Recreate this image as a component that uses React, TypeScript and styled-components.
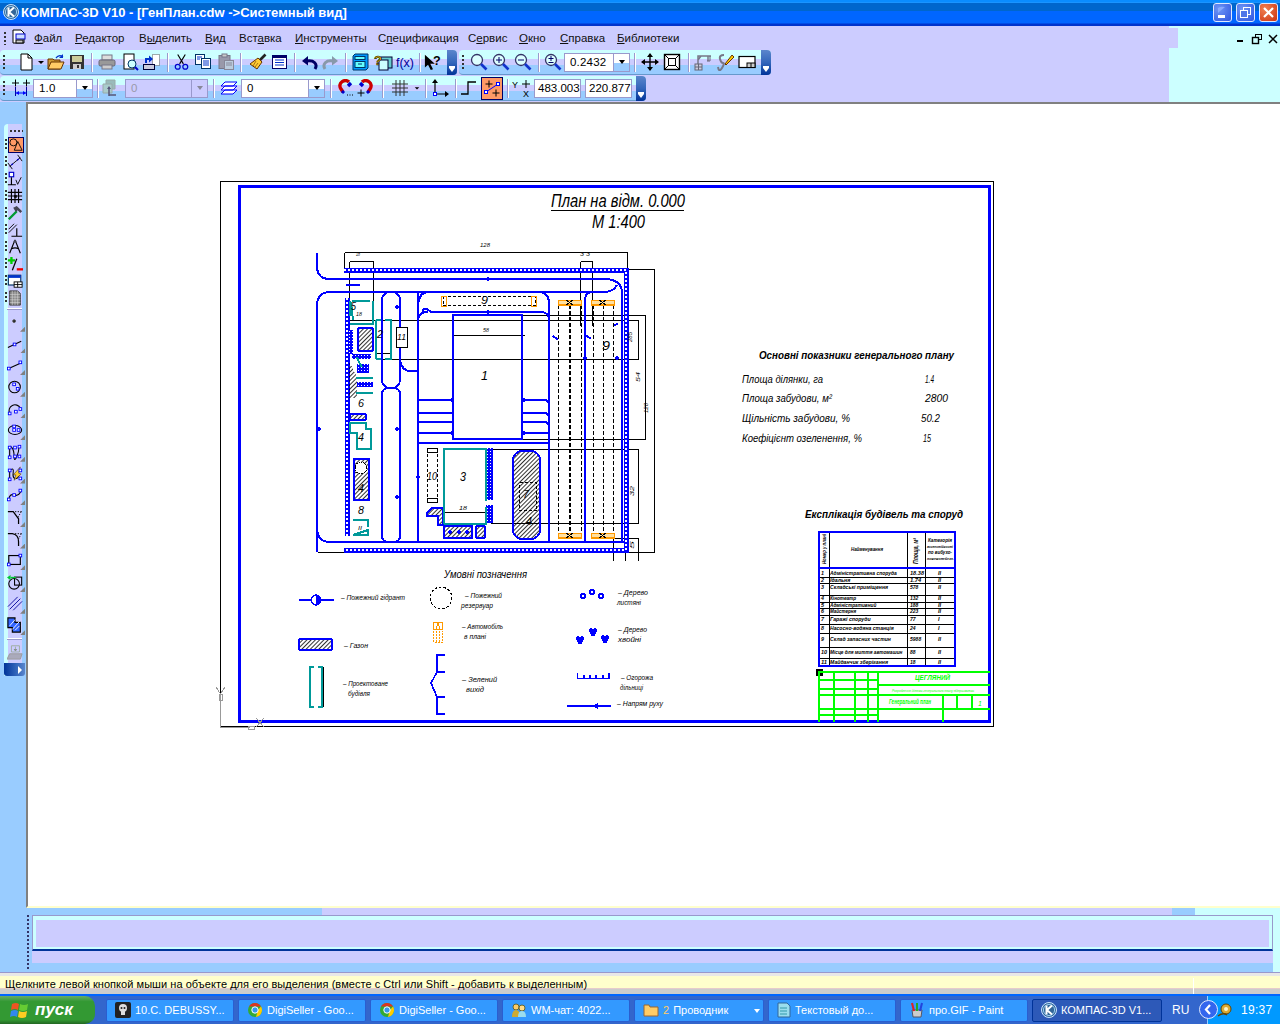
import React from "react";
import styled, { createGlobalStyle } from "styled-components";

const GlobalStyle = createGlobalStyle`
  html, body { margin: 0; padding: 0; background: #fff; overflow: hidden; }
  body { font-family: "Liberation Sans", Arial, sans-serif; font-size: 11px; color: #000; }
`;

const Screen = styled.div`
  width: 1280px; height: 1024px; display: flex; flex-direction: column; overflow: hidden;
`;

/* ---------- title bar ---------- */
const TitleBar = styled.header`
  height: 26px; display: flex; align-items: center; padding: 0 2px 2px 3px; box-sizing: border-box;
  background: linear-gradient(180deg,#0a8cff 0,#0a8cff 2px,#2a9cff 3px,#0066cc 3px,#0066cc 11px,#0066ff 11px,#0066ff 23px,#0033cc 24px,#0033cc 26px);
`;
const TitleText = styled.span`
  margin-left: 2px; color: #fff; font: bold 13px "Liberation Sans", Arial, sans-serif; flex: 1; white-space: nowrap;
`;
const WinBtn = styled.span<{ $red?: boolean }>`
  width: 19px; height: 19px; margin-left: 4px; box-sizing: border-box; border: 1px solid #dfe8ff; border-radius: 3px;
  display: flex; align-items: center; justify-content: center;
  background: ${p => p.$red ? "radial-gradient(circle at 30% 30%,#f08050,#cc3311)" : "radial-gradient(circle at 30% 30%,#6f96f5,#2f55e0)"};
`;

/* ---------- header bands ---------- */
const HeaderBand = styled.div`
  background: linear-gradient(90deg,#ccccff 1169px,#ccffff 1169px);
  height: 76px; display: flex; flex-direction: column; flex: none;
`;
const MenuRow = styled.div`
  height: 24px; position: relative; display: flex;
`;
const MenuStrip = styled.nav`
  width: 1178px; height: 20px; margin-top: 2px; background: #ccccff; display: flex; align-items: center; box-sizing: border-box; padding-left: 4px; flex: none;
`;
const Grip = styled.span`
  width: 2px; height: 13px; flex: none;
  background: repeating-linear-gradient(180deg,#333 0,#333 2px,transparent 2px,transparent 4px);
`;
const SysIcon = styled.span`
  width: 16px; height: 18px; margin: 0 7px 0 5px; display: flex;
`;
const MenuItem = styled.span<{ $w: number }>`
  width: ${p => p.$w}px; flex: none; font-size: 11.5px; color: #111; white-space: nowrap;
  u { text-decoration-thickness: 1px; text-underline-offset: 1px; }
`;
const MdiControls = styled.div`
  margin-left: 58px; display: flex; align-items: center; gap: 5px; margin-top: 2px;
`;
const ToolRow = styled.div`
  height: 26px; display: flex; gap: 2px; flex: none;
`;
const Toolbar = styled.div<{ $w: number }>`
  width: ${p => p.$w}px; height: 25px; box-sizing: border-box; display: flex; align-items: center; padding-left: 3px; position: relative; flex: none;
  border-radius: 4px; border-bottom: 1px solid #6699cc;
  background: linear-gradient(180deg,#ccffff 0,#ccffff 9px,#ccccff 9px,#ccccff 15px,#99ccff 15px,#99ccff 100%);
`;
const TGrip = styled(Grip)<{ $m: number }>`
  height: 15px; margin-right: ${p => p.$m}px;
`;
const Btn = styled.span<{ $w: number; $active?: boolean; $ml?: number }>`
  width: ${p => p.$w}px; height: 23px; flex: none; display: flex; align-items: center; justify-content: center; box-sizing: border-box;
  margin-left: ${p => p.$ml ?? 0}px;
  ${p => p.$active ? "background:#ff9966;border:1px solid #000066;" : ""}
`;
const Sep = styled.span<{ $w: number }>`
  width: ${p => p.$w}px; height: 19px; flex: none; display: flex; justify-content: center;
  &::before { content: ""; width: 1px; background: #9999cc; box-shadow: 1px 0 0 #fff; }
`;
const Combo = styled.span<{ $w: number; $off?: boolean; $ml?: number; $tight?: boolean }>`
  width: ${p => p.$w}px; height: 19px; flex: none; box-sizing: border-box; border: 1px solid #9999cc; display: flex; align-items: center;
  margin-left: ${p => p.$ml ?? 0}px;
  background: ${p => p.$off ? "#ccccff" : "#fff"}; color: ${p => p.$off ? "#9999aa" : "#000"};
  font-size: 11.5px; padding-left: ${p => p.$tight ? 3 : 5}px; position: relative; letter-spacing: ${p => p.$tight ? 0 : .2}px; white-space: nowrap; overflow: hidden;
`;
const ComboArrow = styled.span<{ $off?: boolean }>`
  position: absolute; right: 0; top: 0; bottom: 0; width: 15px; border-left: 1px solid #9999cc;
  background: ${p => p.$off ? "#ccccff" : "linear-gradient(180deg,#fff 0,#fff 9px,#99ccff 9px)"};
  display: flex; align-items: center; justify-content: center;
  &::after { content: ""; border: 3px solid transparent; border-top: 4px solid ${p => p.$off ? "#889" : "#000"}; border-bottom: 0; }
`;
const Handle = styled.span`
  position: absolute; right: 0; top: 0; width: 10px; height: 25px; border-radius: 0 4px 4px 0;
  background: linear-gradient(180deg,#5b86cc 0,#3366bb 50%,#003399 100%);
  display: flex; align-items: flex-end; justify-content: center; padding-bottom: 3px; box-sizing: border-box;
  &::after { content: ""; border: 3px solid transparent; border-top: 4px solid #fff; border-bottom: 0; box-shadow: 0 -2px 0 -0px #fff; }
`;

/* ---------- work area ---------- */
const Work = styled.main`
  height: 806px; display: flex; flex: none;
`;
const Side = styled.aside`
  width: 26px; flex: none; background: #99ccff; padding-top: 22px; box-sizing: border-box;
`;
const SideStrip = styled.div`
  margin-left: 4px; width: 21px; border-radius: 4px 4px 0 0; padding-top: 12px; position: relative;
  background: linear-gradient(90deg,#ccffff 0,#ccffff 4px,#ccccff 4px,#ccccff 18px,#99ccff 18px);
`;
const SideGrip = styled.span`
  position: absolute; left: 6px; top: 6px; width: 13px; height: 2px;
  background: repeating-linear-gradient(90deg,#333 0,#333 2px,transparent 2px,transparent 4px);
`;
const Tool = styled.div<{ $h: number; $grip?: boolean; $menu?: boolean }>`
  height: ${p => p.$h}px; position: relative; display: flex; align-items: center; justify-content: center; box-sizing: border-box;
  svg { width: 16px; height: 16px; }
  ${p => p.$grip ? `&::before{content:"";position:absolute;left:1px;top:3px;width:2px;height:10px;background:repeating-linear-gradient(180deg,#333 0,#333 2px,transparent 2px,transparent 4px);}` : ""}
  ${p => p.$menu ? `&::after{content:"";position:absolute;right:0;bottom:1px;width:5px;height:5px;background:#808080;clip-path:polygon(100% 0,100% 100%,0 100%);}` : ""}
`;
const ActiveTool = styled.span`
  width: 16px; height: 16px; background: #ff9966; border: 1px solid #000066; display: flex; align-items: center; justify-content: center; margin-left: 2px; box-sizing: border-box;
  svg { width: 14px; height: 14px; }
`;
const SideRule = styled.div`
  height: 1px; margin: 2px 3px 2px 3px; background: #fff; box-shadow: 0 1px 0 #9999cc;
`;
const SideHandle = styled.div`
  height: 13px; border-radius: 0 0 3px 3px; display: flex; align-items: center; justify-content: flex-end; padding-right: 3px;
  background: linear-gradient(90deg,#003399 0,#3366bb 60%,#5b86cc 100%);
  &::after { content: ""; border: 4px solid transparent; border-left: 4px solid #fff; border-right: 0; }
`;
const Canvas = styled.section`
  flex: 1; border-top: 2px solid #808080; border-left: 2px solid #808080; border-bottom: 2px solid #ffffcc; background: #fff; display: flex; overflow: hidden;
`;
const Sheet = styled.svg`
  width: 1252px; height: 802px; display: block; flex: none; shape-rendering: crispEdges;
`;
const Cad = styled.text<{ $bold?: boolean }>`
  font-family: "Liberation Sans", Arial, sans-serif; font-style: italic; font-weight: ${p => p.$bold ? 700 : 400};
`;

/* ---------- bottom ---------- */
const Dock = styled.div`
  height: 68px; box-sizing: border-box; padding: 7px 7px 0 32px; position: relative; flex: none;
  background:
    linear-gradient(90deg,#99ccff 322px,#ccccff 322px,#ccccff 1172px,#99ccff 1172px,#99ccff 1195px,#ccffff 1195px) top / 100% 7px no-repeat,
    linear-gradient(180deg,#ccccff 0,#ccccff 55px,#99ccff 55px,#99ccff 64px,#9999cc 64px,#9999cc 65px,#e8e8e8 65px);
`;
const DockFade = styled.span`
  position: absolute; left: 0; top: 0; bottom: 4px; width: 32px; background: #99ccff;
`;
const DockEnd = styled.span`
  position: absolute; right: 0; top: 0; bottom: 4px; width: 7px; background: #ccffff;
`;
const DockGrip = styled.span`
  position: absolute; left: 27px; top: 7px; height: 56px; width: 2px;
  background: repeating-linear-gradient(180deg,#333366 0,#333366 2px,transparent 2px,transparent 4px);
`;
const PropPanel = styled.div`
  height: 36px; box-sizing: border-box; border: 1px solid #9999cc; border-bottom: 2px solid #003399; background: #ccffff; padding: 4px 3px 2px 3px; position: relative;
`;
const PropInner = styled.div`
  height: 100%; background: #ccccff;
`;
const StatusBar = styled.footer`
  height: 18px; box-sizing: border-box; padding-top: 2px; background: linear-gradient(180deg,#ffffcc 0,#ffffcc 12px,#ffcccc 12px,#cccccc 13px); display: flex; position: relative; overflow: hidden; flex: none;
  font-size: 11px; align-items: flex-start; line-height: 13px;
`;
const StatusText = styled.span`
  padding-left: 5px; width: 1194px; box-sizing: border-box; border-right: 1px solid #fff; height: 18px; white-space: nowrap; letter-spacing: .05px;
`;
const TaskBar = styled.div`
  height: 30px; display: flex; align-items: center; background: #3366cc; border-top: 2px solid #0066ff; box-sizing: border-box; position: relative; flex: none;
`;
const Start = styled.span`
  width: 95px; height: 28px; flex: none; display: flex; align-items: center; box-sizing: border-box; padding-left: 10px; gap: 5px;
  border-radius: 0 10px 10px 0; background: linear-gradient(180deg,#66aa66 0,#339933 20%,#339933 85%,#226622 100%);
  color: #fff; font: italic bold 17px "Liberation Sans", Arial, sans-serif; margin-right: 11px;
`;
const Task = styled.span<{ $active?: boolean; $w?: number }>`
  width: ${p => p.$w ?? 128}px; height: 23px; margin-right: ${p => p.$active ? 0 : 4}px; flex: none; box-sizing: border-box; display: flex; align-items: center; padding-left: 8px; gap: 4px; position: relative;
  border-radius: 2px; color: #fff; font-size: 11px; white-space: nowrap; overflow: hidden;
  background: ${p => p.$active ? "#2d59b8" : "#3399ff"}; border: 1px solid ${p => p.$active ? "#003399" : "#2a5ed0"};
`;
const TaskNum = styled.span`
  color: #ffcc66;
`;
const TaskCaret = styled.span`
  position: absolute; right: 3px; top: 9px; border: 3px solid transparent; border-top: 4px solid #fff; border-bottom: 0;
`;
const Lang = styled.span`
  color: #fff; margin-left: 10px; width: 35px; font-size: 12px;
`;
const Tray = styled.span`
  flex: 1; height: 28px; background: #0099ff; display: flex; align-items: center; box-sizing: border-box; position: relative; color: #fff; font-size: 12px; padding-left: 33px; letter-spacing: .3px; gap: 0;
  border-left: 1px solid #99ccff;
`;
const TrayChevron = styled.span`
  position: absolute; left: -9px; top: 4px; width: 19px; height: 19px; border-radius: 50%; box-sizing: border-box; border: 1px solid #dfe8ff; background: #3366ee;
  display: flex; align-items: center; justify-content: center;
`;
const TrayIcon = styled.span`
  position: absolute; left: 9px; top: 6px; display: flex;
`;

/* ---------- icons ---------- */
const S: React.FC<{ s?: number; v?: number; children: React.ReactNode }> = ({ s = 18, v = 18, children }) => (
  <svg width={s} height={s} viewBox={`0 0 ${v} ${v}`}>{children}</svg>
);
const Sq = ({ x, y }: { x: number; y: number }) => <rect x={x - 1.5} y={y - 1.5} width="3" height="3" fill="#fff" stroke="#0000ff" />;
const Mag = ({ c }: { c?: React.ReactNode }) => (
  <S><circle cx="7" cy="7" r="5.5" fill="#ddffff" stroke="#333366" strokeWidth="1.3" /><path d="M11 11l5.5 5.5" stroke="#1133cc" strokeWidth="2.6" />{c}</S>
);
const Cross = ({ x, y, r = 3.5, c = "#000" }: { x: number; y: number; r?: number; c?: string }) => (
  <path d={`M${x - r} ${y}h${2 * r}M${x} ${y - r}v${2 * r}`} stroke={c} fill="none" />
);

const Logo = ({ size = 16 }: { size?: number }) => (
  <svg width={size} height={size} viewBox="0 0 16 16">
    <circle cx="8" cy="8" r="7.5" fill="#336699" stroke="#cce6ff" />
    <circle cx="8" cy="8" r="5.6" fill="none" stroke="#99ccee" />
    <path d="M5.5 3.5v9M11 3.5L6 8l5 4.5" stroke="#fff" strokeWidth="2" fill="none" />
  </svg>
);

const icons: Record<string, React.ReactElement> = {
  new: <S><path d="M4 1h7l4 4v12H4z" fill="#fff" stroke="#000" /><path d="M11 1v4h4" fill="none" stroke="#000" /></S>,
  caret: <S s={8} v={8}><path d="M1 3h6L4 6z" fill="#000" /></S>,
  open: <S><path d="M1 6h5l1 1h6v9H1z" fill="#cc9933" stroke="#663300" /><path d="M1 16l3-7h13l-3 7z" fill="#ffcc66" stroke="#663300" /><path d="M9 5q3-4 7-1" stroke="#0033cc" strokeWidth="1.3" fill="none" /><path d="M16 1v4h-4z" fill="#0033cc" /></S>,
  save: <S><rect x="2" y="2" width="14" height="14" fill="#333" /><rect x="4" y="3" width="10" height="6" fill="#cccc99" /><rect x="5" y="11" width="8" height="5" fill="#ccc" /><rect x="9" y="12" width="2" height="3" fill="#333" /></S>,
  print: <S><rect x="4" y="2" width="10" height="5" fill="#ddd" stroke="#778" /><rect x="1" y="7" width="16" height="6" rx="1.5" fill="#999" stroke="#667" /><rect x="4" y="12" width="10" height="4" fill="#ccc" stroke="#778" /></S>,
  preview: <S><rect x="3" y="1" width="10" height="15" fill="#fff" stroke="#000" /><circle cx="11" cy="11" r="4" fill="#ccffff" stroke="#003366" /><path d="M14 14l3 3" stroke="#0000cc" strokeWidth="2" /></S>,
  swap: <S><rect x="10.5" y="1.5" width="7" height="11" fill="#fff" stroke="#555" strokeDasharray="1 1" /><rect x="1.5" y="11.5" width="11" height="5" fill="#ccd" stroke="#003" /><path d="M4 10V6h3" stroke="#0033cc" strokeWidth="2" fill="none" /><path d="M7 2.5v7l4-3.5z" fill="#0033cc" /></S>,
  cut: <S><path d="M5 1l6 10M13 1L7 11" stroke="#000" strokeWidth="1.2" /><circle cx="5" cy="14" r="2.6" fill="none" stroke="#0000cc" strokeWidth="1.3" /><circle cx="13" cy="14" r="2.6" fill="none" stroke="#0000cc" strokeWidth="1.3" /></S>,
  copy: <S><rect x="1.5" y="1.5" width="9" height="10" fill="#fff" stroke="#003366" /><rect x="7.5" y="5.5" width="9" height="10" fill="#fff" stroke="#003366" /><path d="M3 4h5M3 6h3M9 8h6M9 10h6M9 12h6" stroke="#0033cc" /></S>,
  paste: <S><rect x="2" y="2.5" width="11" height="13" fill="#99a" stroke="#778" /><rect x="5" y="1" width="5" height="3" fill="#ccc" stroke="#778" /><rect x="7.5" y="7.5" width="9" height="9" fill="#bcd" stroke="#889" /><path d="M9 10h6M9 12h6" stroke="#889" /></S>,
  brush: <S><path d="M16.5 1.5l-6 6" stroke="#222" strokeWidth="2.6" /><path d="M9 5l4 4-5 7-7-5z" fill="#ffcc33" stroke="#663300" /><path d="M4 13l3-5M6 14l3-4" stroke="#663300" strokeWidth=".6" /></S>,
  list: <S s={16} v={16}><rect x=".5" y="1.5" width="14" height="13" fill="#fff" stroke="#000066" /><rect x=".5" y="1.5" width="14" height="2.5" fill="#000066" /><path d="M3 6h9M3 8.5h9M3 11h9" stroke="#0033cc" /></S>,
  undo: <S><path d="M14 16c3-5-1-9-8-8" stroke="#000066" strokeWidth="3" fill="none" /><path d="M7 3L1 8l6 4.5z" fill="#000066" /></S>,
  redo: <S><path d="M4 16c-3-5 1-9 8-8" stroke="#8899aa" strokeWidth="3" fill="none" /><path d="M11 3l6 5-6 4.5z" fill="#8899aa" /></S>,
  block: <S><path d="M4 1h13v14l-2 2H2V3z" fill="#0099ff" stroke="#003366" /><rect x="4" y="3.5" width="10" height="3" fill="#66ffff" stroke="#003366" /><rect x="4" y="8.5" width="10" height="6" fill="#66ffff" stroke="#003366" /><path d="M7 11h4" stroke="#003366" /></S>,
  qhelp: <S v={20} s={20}><rect x="8" y="5" width="11" height="11" fill="#66cccc" stroke="#003" /><rect x="6" y="8" width="9" height="10" fill="#ccffff" stroke="#003" /><text x="1" y="13" fontFamily="Liberation Sans" fontWeight="700" fontSize="13" fill="#ffcc00" stroke="#000" strokeWidth=".6">?</text></S>,
  fx: <S s={18} v={18}><text x="0" y="14" fontFamily="Liberation Sans" fontSize="13" fill="#000099" textLength="18" lengthAdjust="spacingAndGlyphs">f(x)</text></S>,
  help: <S s={20} v={20}><path d="M1 2v14l3.5-3 3 6 2.5-1-3-6h5z" fill="#000" /><text x="10" y="13" fontFamily="Liberation Sans" fontWeight="700" fontSize="14" fill="#000">?</text></S>,
  zoom: <Mag />,
  zoomIn: <Mag c={<path d="M4 7h6M7 4v6" stroke="#000066" />} />,
  zoomOut: <Mag c={<path d="M4 7h6" stroke="#000066" />} />,
  zoomPm: <Mag c={<path d="M4.5 5.5h5M7 3v5M4.5 9.5h5" stroke="#000066" />} />,
  pan: <S><path d="M9 1v16M1 9h16" stroke="#000" strokeWidth="1.4" /><path d="M9 0l3 4H6zM9 18l3-4H6zM0 9l4-3v6zM18 9l-4-3v6z" fill="#000" /></S>,
  fit: <S><rect x="1.5" y="1.5" width="15" height="15" fill="#fff" stroke="#000" strokeWidth="1.4" /><rect x="5.5" y="5.5" width="7" height="7" fill="none" stroke="#000" /><path d="M2 2l4 4M16 2l-4 4M2 16l4-4M16 16l-4-4" stroke="#000" /></S>,
  crane: <S><path d="M4 17V3h13M7 3L4 7M14 3v5" stroke="#778" strokeWidth="1.5" fill="none" /><rect x="1" y="11" width="7" height="6" fill="#ccd" stroke="#667" /><path d="M1 14h7M4.5 11v6" stroke="#667" /><path d="M16 3v5M13 8h3" stroke="#667" /></S>,
  hook: <S><path d="M8 2q-5 0-4 4t3 4-1 5-4-1" stroke="#778" strokeWidth="2" fill="none" /><path d="M9 11l7-9 2 2-8 8z" fill="#ffcc00" stroke="#663300" /></S>,
  win: <S><rect x="1" y="3.5" width="16" height="11" fill="#fff" stroke="#000" strokeWidth="1.2" /><rect x="9" y="10" width="8" height="4.5" fill="#ccc" stroke="#000" /><path d="M13 10v4.5" stroke="#000" /></S>,
  dim: <S><Cross x={3.5} y={4} /><Cross x={14.5} y={4} /><path d="M3.5 8v9M14.5 8v9" stroke="#000099" /><path d="M3.5 14h11" stroke="#0000ff" /><path d="M4 14l3-2v4zM14 14l-3-2v4z" fill="#0000ff" /></S>,
  layGray: <S><path d="M5 1h9v9H5z" fill="#99bbbb" stroke="#99aaaa" /><path d="M2 5h9v9H2z" fill="#aacccc" stroke="#99aaaa" /><path d="M8 17V9M8 16h7" stroke="#557" strokeWidth="1.5" /><path d="M8 7l2 3H6z" fill="#557" /></S>,
  layers: <S><path d="M5 3h12l-4 4H1zM5 7h12l-4 4H1zM5 11h12l-4 4H1z" fill="#fff" stroke="#0000ff" /></S>,
  mag1: <S><path d="M13 3C9-1 1 4 5 10l2 3" stroke="#cc0000" strokeWidth="3.4" fill="none" /><path d="M15 4l-3 3" stroke="#0000cc" strokeWidth="3.4" /><path d="M8 12l-2 2" stroke="#0000cc" strokeWidth="3" /><path d="M11 16h1M13.5 16h1M16 16h1" stroke="#000" /></S>,
  mag2: <S><path d="M5 3c4-4 12 1 8 7l-2 3" stroke="#cc0000" strokeWidth="3.4" fill="none" /><path d="M3 4l3 3" stroke="#0000cc" strokeWidth="3.4" /><path d="M10 12l2 2" stroke="#0000cc" strokeWidth="3" /><Cross x={4} y={14} /></S>,
  grid: <S><path d="M1 5h16M1 9h16M1 13h16M5 1v16M9 1v16M13 1v16" stroke="#333" /></S>,
  axes: <S><path d="M4 15V3M4 15h12" stroke="#000" strokeWidth="1.2" /><path d="M4 0l3 4H1zM18 15l-4-3v6z" fill="#000" /><rect x="2.5" y="13.5" width="3" height="3" fill="#fff" stroke="#0000ff" /></S>,
  step: <S><path d="M1 15h7V3h8" stroke="#000" fill="none" strokeWidth="1.3" /></S>,
  snap: <S><path d="M3 13L15 5" stroke="#0000ff" /><Sq x={3} y={13} /><Sq x={15} y={5} /><Cross x={6} y={5} /><Cross x={13} y={14} /></S>,
  yx: <S s={20} v={20}><text x="0" y="10" fontSize="9" fontFamily="Liberation Sans">Y</text><text x="11" y="19" fontSize="9" fontFamily="Liberation Sans">X</text><Cross x={14} y={6} r={4} /></S>,
  ot: <S s={16} v={16}><circle cx="5" cy="5" r="4" fill="none" stroke="#000" /><path d="M10 4l5 10H6z" fill="none" stroke="#000" /></S>,
  dimS: <S><path d="M3 14L15 4" stroke="#000" /><path d="M1 10l5 7M12 1l5 7" stroke="#000" /><path d="M4 13l3-1-1-2zM14 5l-3 1 1 2z" fill="#0000cc" /></S>,
  ortho: <S><rect x="2.5" y="1.5" width="5" height="5" fill="#fff" stroke="#0000cc" strokeWidth="1.3" /><path d="M5 7v8M1 15.5h9" stroke="#000" strokeWidth="1.3" /><path d="M10 10l2 5 4-8" stroke="#000" fill="none" /></S>,
  gridT: <S><path d="M1 5h16M1 9h16M1 13h16M5 1v16M9 1v16M13 1v16" stroke="#000" strokeWidth="1.3" /><rect x="8" y="8" width="3" height="3" fill="#000" /></S>,
  hammer: <S><path d="M2 16L11 7" stroke="#009933" strokeWidth="2.6" /><path d="M7 3l4-2 6 6-2 2-3-3-2 2z" fill="#445" /></S>,
  par: <S><path d="M2 8l6-6M2 12l9-9" stroke="#000" /><path d="M11 7v9M5 16h12" stroke="#000" strokeWidth="1.3" /></S>,
  compass: <S><path d="M9 1L3 16M9 1l6 15M5 11q4-2 8 0" stroke="#000" strokeWidth="1.3" fill="none" /><circle cx="9" cy="2.5" r="1.5" fill="#445" /></S>,
  plusMinus: <S><path d="M1 5h8M5 1v8" stroke="#00cc00" strokeWidth="2.6" /><path d="M11 15h7" stroke="#ee0000" strokeWidth="2.6" /><path d="M11 3L6 16" stroke="#000" strokeWidth="1.4" /></S>,
  winS: <S><rect x="1.5" y="2.5" width="14" height="11" fill="#fff" stroke="#003366" strokeWidth="1.3" /><rect x="1.5" y="2.5" width="14" height="3" fill="#0033cc" /><rect x="8" y="10" width="9" height="6" fill="#fff" stroke="#000" /><path d="M12 10v6M8 13h9" stroke="#000" /></S>,
  pageS: <S><path d="M3 1h9l3 3v13H3z" fill="#888" stroke="#333" /><path d="M3 5h12M3 8h12M3 11h12M3 14h12M6 1v16M9 1v16M12 1v16" stroke="#ddd" strokeWidth=".6" /></S>,
  point: <S><circle cx="8" cy="8" r="1.6" fill="#222" stroke="#555" /></S>,
  seg1: <S><path d="M1 13L16 6" stroke="#000" strokeWidth="1.2" /><Sq x={8.5} y={9.5} /></S>,
  seg2: <S><path d="M2 13L15 7" stroke="#000" strokeWidth="1.2" /><Sq x={2} y={13} /><Sq x={15} y={6} /></S>,
  circle: <S><circle cx="8.5" cy="9" r="6.5" fill="none" stroke="#000" strokeWidth="1.2" /><Sq x={8} y={6} /><Sq x={12} y={11} /></S>,
  arc: <S><path d="M3 14A6.5 6.5 0 0 1 15 8" fill="none" stroke="#000" strokeWidth="1.2" /><Sq x={3} y={14} /><Sq x={15} y={9} /><Sq x={10} y={12} /></S>,
  ellipse: <S><ellipse cx="9" cy="9" rx="7.5" ry="5" fill="none" stroke="#000" strokeWidth="1.2" /><Sq x={8} y={5} /><Sq x={8} y={9} /><Sq x={13} y={9} /></S>,
  spline: <S><path d="M3 15V4q0-3 2.5 0T8 14t3 0 2-10" fill="none" stroke="#000" strokeWidth="1.2" /><Sq x={3} y={15} /><Sq x={3} y={4} /><Sq x={9} y={4} /><Sq x={9} y={14} /><Sq x={14} y={3} /><Sq x={14} y={14} /></S>,
  nurbs: <S><path d="M3 15V5q5-4 4 2t2 7 5-5" fill="none" stroke="#000" strokeWidth="1.2" /><path d="M7 10l8-9-2 7 3 1-8 7 2-6z" fill="#ffcc33" stroke="#000" strokeWidth=".5" /><Sq x={3} y={15} /><Sq x={3} y={5} /><Sq x={15} y={5} /><Sq x={15} y={14} /></S>,
  bez: <S><path d="M2 14q1-7 6-5t8-5" fill="none" stroke="#000" strokeWidth="1.2" /><Sq x={2} y={14} /><Sq x={8} y={9} /><Sq x={15} y={4} /></S>,
  fil1: <S><path d="M1 3h6l6 8v6" fill="none" stroke="#000" strokeWidth="1.4" /><path d="M9 3h8" stroke="#000" strokeDasharray="1.5 1.5" /><path d="M16 3L12 10" stroke="#000" strokeDasharray="1.5 1.5" /></S>,
  fil2: <S><path d="M1 3h5q7 1 7 9v5" fill="none" stroke="#000" strokeWidth="1.4" /><path d="M9 3h8M16 3L13 9" stroke="#000" strokeDasharray="1.5 1.5" /></S>,
  rect: <S><rect x="2" y="4" width="13" height="10" fill="none" stroke="#000" strokeWidth="1.3" /><Sq x={2} y={14} /><Sq x={15} y={4} /></S>,
  circArrow: <S><circle cx="8" cy="11" r="6" fill="none" stroke="#000" strokeWidth="1.2" /><rect x="8.5" y="3.5" width="8" height="9" fill="none" stroke="#000" strokeWidth="1.2" /><path d="M4 4h6" stroke="#00cc33" strokeWidth="1.6" /><path d="M0 4l4-3v6z" fill="#00cc33" /></S>,
  hatchL: <S><path d="M1 12L12 1M3 15L15 3M7 16L17 6" stroke="#000099" /></S>,
  hatchF: <S><path d="M1 1h8v5h6v11H6v-5H1z" fill="#3366ff" stroke="#000" strokeWidth="1.3" /><path d="M3 10l6-7M6 14l8-9M9 15l5-5" stroke="#fff" /></S>,
  down: <S><path d="M5 2h9v7H5z" fill="none" stroke="#99aa99" /><path d="M9.5 3v4M8 6l1.5 2L11 6" stroke="#99aa99" /><path d="M3 11h14l-2 6H0z" fill="#aab" stroke="#999" /></S>,
};
const Ic = ({ n }: { n: string }) => icons[n];

const ChromeIcon = () => (
  <svg width="16" height="16" viewBox="0 0 16 16"><circle cx="8" cy="8" r="7" fill="#33aa33" /><path d="M8 1a7 7 0 0 1 6 3.5H8z" fill="#dd3322" /><path d="M2 4.5A7 7 0 0 1 8 1v3.5z" fill="#dd3322" /><path d="M14 4.5A7 7 0 0 1 9 15l2-7z" fill="#ffcc00" /><circle cx="8" cy="8" r="3.2" fill="#3399ee" stroke="#fff" /></svg>
);

/* ---------- data ---------- */
type BarItem = { i?: string; w: number; sep?: boolean };
const bar1: BarItem[] = [
  { i: "new", w: 21 }, { i: "caret", w: 9 }, { i: "open", w: 21 }, { i: "save", w: 22 }, { sep: true, w: 6 }, { i: "print", w: 25 }, { i: "preview", w: 22 }, { i: "swap", w: 20 },
  { sep: true, w: 12 }, { i: "cut", w: 17 }, { i: "copy", w: 26 }, { i: "paste", w: 20 }, { sep: true, w: 8 }, { i: "brush", w: 28 }, { i: "list", w: 16 }, { sep: true, w: 12 },
  { i: "undo", w: 20 }, { i: "redo", w: 20 }, { sep: true, w: 10 }, { i: "block", w: 20 }, { i: "qhelp", w: 26 }, { i: "fx", w: 18 }, { sep: true, w: 10 }, { i: "help", w: 18 },
];
const menu: [React.ReactNode, number][] = [
  [<><u>Ф</u>айл</>, 41], [<><u>Р</u>едактор</>, 64], [<>В<u>ы</u>делить</>, 66], [<><u>В</u>ид</>, 34], [<>Вст<u>а</u>вка</>, 56], [<><u>И</u>нструменты</>, 83],
  [<>С<u>п</u>ецификация</>, 90], [<>С<u>е</u>рвис</>, 51], [<><u>О</u>кно</>, 41], [<><u>С</u>правка</>, 57], [<><u>Б</u>иблиотеки</>, 70],
];
const side1 = ["dimS", "ortho", "gridT", "hammer", "par", "compass", "plusMinus", "winS", "pageS"];
const side2 = ["point", "seg1", "seg2", "circle", "arc", "ellipse", "spline", "nurbs", "bez", "fil1", "fil2", "rect", "circArrow", "hatchL", "hatchF"];

/* ---------- drawing ---------- */
const BLUE = "#0000ff", TEAL = "#009999", OR = "#ff9900", GR = "#00ff00";
type L = [number, number, number, string, number?, boolean?];
const labels: L[] = [
  [551, 685, 207, "План на відм. 0.000", 18], [592, 645, 228, "М 1:400", 18],
  [759, 954, 359, "Основні показники генерального плану", 10, true],
  [742, 823, 383, "Площа ділянки, га", 11], [925, 934, 383, "1.4", 11],
  [742, 832, 402, "Площа забудови, м²", 11], [925, 948, 402, "2800", 11],
  [742, 850, 422, "Щільність забудови, %", 11], [921, 940, 422, "50.2", 11],
  [742, 862, 442, "Коефіцієнт озеленення, %", 11], [923, 931, 442, "15", 11],
  [805, 963, 518, "Експлікація будівель та споруд", 11, true],
  [444, 527, 578, "Умовні позначення", 10],
  [341, 405, 600, "– Пожежний гідрант", 7], [465, 502, 598, "– Пожежний", 7], [461, 493, 608, "резервуар", 7],
  [618, 648, 595, "– Дерево", 7], [617, 641, 605, "листяні", 7], [462, 503, 629, "– Автомобіль", 7], [464, 486, 639, "в плані", 7],
  [344, 368, 648, "– Газон", 7], [618, 647, 632, "– Дерево", 7], [618, 641, 642, "хвойні", 7],
  [343, 388, 686, "– Проектоване", 7], [348, 370, 696, "будівля", 7], [462, 497, 682, "– Зелений", 7], [466, 484, 692, "вихід", 7],
  [621, 653, 680, "– Огорожа", 7], [620, 643, 690, "дільниці", 7], [617, 663, 706, "– Напрям руху", 7],
  [480, 490, 247, "128", 6], [356, 360, 256, "18", 5], [580, 590, 256, "3 3", 5], [483, 489, 332, "58", 5], [459, 467, 510, "18", 5],
  [481, 488, 380, "1", 12], [481, 488, 304, "9", 11], [602, 610, 350, "9", 12], [351, 356, 310, "5", 11], [356, 362, 316, "18", 5],
  [377, 383, 338, "2", 11], [397, 406, 340, "11", 9], [358, 364, 407, "6", 11], [358, 364, 441, "4", 11], [358, 364, 492, "4", 11],
  [358, 364, 514, "8", 11], [427, 437, 480, "10", 11], [460, 466, 481, "3", 12], [523, 529, 498, "7", 11], [526, 532, 525, "4", 11], [358, 362, 530, "II", 5],
];
const vLabels: L[] = [[632, 332, 342, "285", 5], [640, 372, 382, "54", 5], [648, 403, 413, "128", 5], [634, 486, 496, "32", 5], [634, 541, 549, "5", 5]];
const lines = [
  "M344 252H627M344 252V270M627 252V269", "M349 261H373M349 261V322M373 261V322M580 261H592M580 261V325M592 261V325",
  "M627 269H654V552H317", "M349 320H638M375 359H638M638 320V359", "M520 315H645V439H515", "M490 449H638V523H490",
  "M613 538H638M613 538V560M625 538V560M638 538V560", "M453 335H524", "M443 512H487", "M376 353H390",
];
const roads = [
  "M317 253V268Q318 279 330 279H606Q622 280 622 293V541", "M317 552V306Q317 292 330 292H606Q614 291 617 285", "M317 530Q318 541 328 542H624",
  "M400 360Q402 372 412 371H418", "M418 292V542", "M419 302Q419 292 430 292H538Q549 292 549 303V542",
  "M423 312Q422 305 431 312H540Q548 312 549 318", "M419 318Q419 312 428 312", "M419 400H453M419 413H453M419 422H453M419 433H453", "M522 400H544Q549 400 549 406M522 413H544Q549 413 549 418M522 422H544Q549 422 549 428M522 433H549",
  "M419 443H549", "M585 542V300Q585 292 593 292H606", "M553 336Q556 339 558 339M586 335Q588 338 591 338M614 326Q616 324 618 324", "M346 285H360",
];
const teal = [
  "M352 301H370M373 301V324H350M350 301V316", "M351 302L353 320", "M376 320V359M376 320H381M385 320H391V359H385M381 359H376",
  "M356 378H373M356 393H373", "M357 357Q358 361 362 367", "M350 423H366V429H371V449H357V433H350Z",
  "M444 524V449H486V501M486 507V524H444", "M353 520H368V527M368 530V535H353Z",
];
const tableRows: [string, string, string, string, number][] = [
  ["1", "Адміністративна споруда", "18.38", "II", 575],
  ["2", "Їдальня", "1.74", "II", 582],
  ["3", "Складські приміщення", "578", "II", 589],
  ["4", "Кінотеатр", "132", "II", 600],
  ["5", "Адміністративний", "188", "II", 607],
  ["6", "Майстерня", "223", "II", 613],
  ["7", "Гаражі споруди", "77", "I", 621],
  ["8", "Насосно-водяна станція", "24", "I", 630],
  ["9", "Склад запасних частин", "5988", "II", 641],
  ["10", "Місце для миття автомашин", "88", "II", 654],
  ["11", "Майданчик зберігання", "18", "II", 664],
];
const Plan = () => (
  <Sheet viewBox="28 104 1252 802">
    <defs>
      <pattern id="ha" width="3" height="3" patternUnits="userSpaceOnUse" patternTransform="rotate(45)"><line x1="0" y1="0" x2="0" y2="3" stroke="#000" strokeWidth=".8" /></pattern>
      <pattern id="de" width="3" height="3" patternUnits="userSpaceOnUse"><rect width="3" height="3" fill={BLUE} /><rect x="1" y="1" width="1.2" height="1.2" fill="#fff" /></pattern>
    </defs>
    <rect x="220.5" y="181.5" width="773" height="545" fill="#fff" stroke="#000" />
    <rect x="239.5" y="186.5" width="750" height="535" fill="none" stroke={BLUE} strokeWidth="2.4" />
    <path d="M551 210.5H684" stroke="#000" />
    <g fill="none" stroke="#000" strokeWidth="1" transform="translate(.5 .5)">{lines.map((d, i) => <path key={i} d={d} />)}</g>
    <g fill="none">
      <path d="M344 270H626V550H344" stroke={BLUE} strokeWidth="5" />
      <path d="M347 298V536" stroke={BLUE} strokeWidth="5" />
      <path d="M344 270H626V550H344M347 298V536" stroke="#fff" strokeWidth="1.4" strokeDasharray="1.6 2.4" />
    </g>
    <g fill="none" stroke={BLUE} strokeWidth="2">
      {roads.map((d, i) => <path key={i} d={d} />)}
      <rect x="382" y="292" width="18" height="96" rx="8" /><rect x="382" y="388" width="18" height="154" rx="6" />
      <rect x="453" y="315" width="69" height="124" />
    </g>
    <g fill="url(#ha)" stroke={BLUE} strokeWidth="2">
      <rect x="358" y="328" width="15" height="23" rx="2" /><rect x="350" y="414" width="16" height="6" rx="2" /><rect x="354" y="459" width="15" height="41" />
      <rect x="513" y="451" width="27" height="88" rx="9" /><rect x="444" y="526" width="28" height="12" /><rect x="476" y="526" width="9" height="12" rx="2" />
      <path d="M427 513L432 508H443V525H438V516H427Z" />
    </g>
    <path d="M349 362L357 376V398H349Z" fill="url(#ha)" />
    <g fill="url(#de)">
      <rect x="352" y="354" width="19" height="5" /><rect x="357" y="364" width="12" height="9" /><rect x="357" y="382" width="16" height="5" />
      <rect x="486" y="448" width="7" height="52" /><rect x="486" y="505" width="7" height="18" /><rect x="349" y="330" width="4" height="24" />
    </g>
    <g fill="none" stroke={TEAL} strokeWidth="2">{teal.map((d, i) => <path key={i} d={d} />)}</g>
    <g fill={BLUE}>
      {[[397, 307], [397, 429], [397, 497], [319, 429], [418, 477], [488, 312], [585, 358], [617, 358], [452, 400], [524, 400], [452, 433], [524, 433], [488, 279], [450, 532], [459, 532], [467, 532]].map(([x, y], i) => <circle key={i} cx={x} cy={y} r="1.8" />)}
    </g>
    <circle cx="361" cy="468" r="6" fill="#fff" stroke="#000" strokeDasharray="1.5 1" />
    <g fill="none" stroke="#000">
      <rect x="396.5" y="327.5" width="11" height="20" fill="#fff" />
      <rect x="427.5" y="448.5" width="10" height="54" strokeDasharray="3 2" /><rect x="427.5" y="448.5" width="10" height="4" /><rect x="427.5" y="498.5" width="10" height="4" />
      <rect x="519.5" y="482.5" width="17" height="28" strokeDasharray="3 2" />
      <rect x="443" y="296.5" width="92" height="9" fill="none" strokeDasharray="3 2" />
      <path d="M558.5 305V533M581.5 305V533M593.5 305V533M613.5 305V533M603.5 305V533" strokeDasharray="3.5 2.5" />
      <path d="M570 305V533" strokeDasharray="3.5 2.5" strokeWidth="1.8" />
    </g>
    <g fill="none" stroke={OR}>
      <rect x="441.5" y="296.5" width="5" height="10" /><rect x="531.5" y="296.5" width="5" height="10" />
      {[[558, 300], [591, 300], [558, 533], [591, 533]].map(([x, y], i) => <g key={i}><rect x={x + .5} y={y + .5} width="23" height="4.5" strokeWidth="1.2" fill="#ffe0a0" /><path d={`M${x + 8} ${y}l7 5M${x + 15} ${y}l-7 5`} stroke="#000" /></g>)}
    </g>
    <path d="M299 599.5H334" stroke={BLUE} strokeWidth="2" /><circle cx="316" cy="600" r="5" fill="#fff" stroke={BLUE} strokeWidth="1.5" /><path d="M316 595a5 5 0 0 1 0 10z" fill={BLUE} />
    <circle cx="441" cy="598" r="11" fill="none" stroke="#000" strokeDasharray="2.5 2" />
    {[[583, 596], [592, 592], [601, 596]].map(([x, y], i) => <circle key={i} cx={x} cy={y} r="2.3" fill="#fff" stroke={BLUE} strokeWidth="1.8" />)}
    {[[580, 640], [593, 632], [605, 639]].map(([x, y], i) => <g key={i} fill={BLUE}><circle cx={x - 2} cy={y - 1.5} r="2.2" /><circle cx={x + 2} cy={y - 1.5} r="2.2" /><circle cx={x} cy={y + 1.5} r="2.6" /></g>)}
    <path d="M433.5 622.5h9v7h-9zM436 629l2-6 2 6" fill="none" stroke={OR} /><path d="M433.5 631v11h9v-11M436.5 631v11M439.5 631v11" fill="none" stroke={OR} strokeDasharray="2 1" />
    <rect x="299" y="639" width="33" height="11" rx="2" fill="url(#ha)" stroke={BLUE} strokeWidth="2" />
    <path d="M309.5 667V707M323 667V707" stroke="#000" strokeWidth="1" /><path d="M314 667H310V707H314M318 667H322V707H318" fill="none" stroke={TEAL} strokeWidth="2" />
    <path d="M445 655H437V672L431 683L437 697V714H445M437 672H445M437 697H445" fill="none" stroke={BLUE} strokeWidth="1.6" />
    <path d="M577.5 673V678.5H609V673M584 675V678M590 675V678M596 675V678M603 675V678" fill="none" stroke={BLUE} strokeWidth="1.5" />
    <path d="M567 706H611" stroke={BLUE} strokeWidth="1.5" /><path d="M592 706l6-3v6z" fill={BLUE} />
    <g stroke="#000" fill="none">
      <path d="M829.5 531V666M907.5 531V666M925.5 531V666" />
      {[577, 583, 595, 602, 608, 615, 624, 633, 647, 658].map(y => <path key={y} d={`M819 ${y + .5}H955`} />)}
    </g>
    <rect x="819" y="531.5" width="136" height="134.5" fill="none" stroke={BLUE} strokeWidth="2" /><path d="M819 568H955" stroke={BLUE} strokeWidth="2" />
    <Cad $bold x="851" y="551" fontSize="5" textLength="32" lengthAdjust="spacingAndGlyphs">Найменування</Cad>
    <Cad $bold x="928" y="542" fontSize="5" textLength="24" lengthAdjust="spacingAndGlyphs">Категорія</Cad>
    <Cad $bold x="927" y="548" fontSize="4" textLength="26" lengthAdjust="spacingAndGlyphs">вогнестійкості</Cad>
    <Cad $bold x="928" y="554" fontSize="5" textLength="24" lengthAdjust="spacingAndGlyphs">по вибухо-</Cad>
    <Cad $bold x="927" y="560" fontSize="4" textLength="27" lengthAdjust="spacingAndGlyphs">пожежонебезп.</Cad>
    <Cad $bold transform="translate(826 564) rotate(-90)" x="0" y="0" fontSize="5" textLength="30" lengthAdjust="spacingAndGlyphs">Номер у плані</Cad>
    <Cad $bold transform="translate(918 564) rotate(-90)" x="0" y="0" fontSize="7" textLength="26" lengthAdjust="spacingAndGlyphs">Площа, м²</Cad>
    {tableRows.map(r => {
      const len = Math.min(75, r[1].length * 2.9);
      return (
        <g key={r[0]}>
          <Cad $bold x="821" y={r[4]} fontSize="5.5" textLength={r[0].length * 3} lengthAdjust="spacingAndGlyphs">{r[0]}</Cad>
          <Cad $bold x="830" y={r[4]} fontSize="5.2" textLength={len} lengthAdjust="spacingAndGlyphs">{r[1]}</Cad>
          <Cad $bold x="910" y={r[4]} fontSize="5.5" textLength={r[2].length * 2.8} lengthAdjust="spacingAndGlyphs">{r[2]}</Cad>
          <Cad $bold x="938" y={r[4]} fontSize="5.5">{r[3]}</Cad>
        </g>
      );
    })}
    <rect x="816" y="669" width="7" height="7" fill="#000" />
    <g fill="none" stroke={GR} strokeWidth="1.6">
      <path d="M818 672H990M819 672V722M834 672V722M855 672V722M868 672V722M878 672V722M943 695V722M957 695V709M972 695V709" />
      <path d="M819 680H878M819 689H878M819 695H990M819 709H990M819 715H878M878 685H990" />
    </g>
    <Cad $bold x="915" y="680" fill={GR} fontSize="6.5" textLength="35" lengthAdjust="spacingAndGlyphs">ЦЕГЛЯНИЙ</Cad>
    <Cad x="892" y="692" fill={GR} fontSize="3.2" textLength="82" lengthAdjust="spacingAndGlyphs">Розроблення ділянки генерального плану підприємства</Cad>
    <Cad $bold x="889" y="704" fill={GR} fontSize="7" textLength="42" lengthAdjust="spacingAndGlyphs">Генеральний план</Cad>
    <Cad x="978" y="706" fill={GR} fontSize="7">1</Cad>
    {labels.map((l, i) => (
      <Cad key={i} $bold={l[5]} x={l[0]} y={l[2]} fontSize={l[4]} textLength={l[1] - l[0]} lengthAdjust="spacingAndGlyphs">{l[3]}</Cad>
    ))}
    {vLabels.map((l, i) => (
      <Cad key={i} transform={`translate(${l[0]} ${l[2]}) rotate(-90)`} x="0" y="0" fontSize={l[4]} textLength={l[2] - l[1]} lengthAdjust="spacingAndGlyphs">{l[3]}</Cad>
    ))}
    <g fill="none" stroke="#999">
      <path d="M220.5 694V727.5H250M220.5 694l-4.5-7M220.5 694l4.5-7" strokeWidth="1" />
      <rect x="219" y="694" width="3" height="6" /><rect x="248" y="726" width="6" height="3" />
      <path d="M256 718l8 9M264 718l-8 9" />
    </g>
  </Sheet>
);

export default function App() {
  return (
    <Screen>
      <GlobalStyle />
      <TitleBar>
        <Logo />
        <TitleText>КОМПАС-3D V10 - [ГенПлан.cdw -&gt;Системный вид]</TitleText>
        <WinBtn><S s={15} v={15}><path d="M3 3q3-2 7-1l-5 4-2 2z" fill="#88aaff" /><rect x="3" y="10" width="7" height="3" fill="#fff" /></S></WinBtn>
        <WinBtn><S s={15} v={15}><rect x="5.5" y="2.5" width="7" height="7" fill="none" stroke="#fff" /><rect x="2.5" y="5.5" width="7" height="7" fill="#4f75e8" stroke="#fff" /></S></WinBtn>
        <WinBtn $red><S s={15} v={15}><path d="M3 3l9 9M12 3l-9 9" stroke="#fff" strokeWidth="2.2" /></S></WinBtn>
      </TitleBar>
      <HeaderBand>
        <MenuRow>
          <MenuStrip>
            <Grip />
            <SysIcon><S s={16} v={16}><path d="M2 1h8l3 3v10H2z" fill="#fff" stroke="#000" /><rect x="5" y="5" width="9" height="5" fill="#ccddff" stroke="#0000cc" /><rect x="5" y="11" width="7" height="3" fill="#ccc" stroke="#000" /></S></SysIcon>
            {menu.map((m, i) => <MenuItem key={i} $w={m[1]}>{m[0]}</MenuItem>)}
          </MenuStrip>
          <MdiControls>
            <S s={10} v={10}><rect x="1" y="6" width="6" height="2" fill="#000" /></S>
            <S s={12} v={12}><rect x="4.5" y="1.5" width="6" height="5" fill="none" stroke="#000" /><rect x="1.5" y="4.5" width="6" height="6" fill="#ccffff" stroke="#000" strokeWidth="1.4" /></S>
            <S s={10} v={10}><path d="M1 1l8 8M9 1L1 9" stroke="#000" strokeWidth="1.5" /></S>
          </MdiControls>
        </MenuRow>
        <ToolRow>
          <Toolbar $w={457}>
            <TGrip $m={10} />
            {bar1.map((b, k) => b.sep ? <Sep key={k} $w={b.w} /> : <Btn key={k} $w={b.w}><Ic n={b.i!} /></Btn>)}
            <Handle />
          </Toolbar>
          <Toolbar $w={312}>
            <TGrip $m={4} />
            <Btn $w={22}><Ic n="zoom" /></Btn><Btn $w={22}><Ic n="zoomIn" /></Btn><Btn $w={22}><Ic n="zoomOut" /></Btn>
            <Sep $w={8} /><Btn $w={22}><Ic n="zoomPm" /></Btn>
            <Combo $w={66}>0.2432<ComboArrow /></Combo>
            <Sep $w={9} /><Btn $w={22}><Ic n="pan" /></Btn><Btn $w={22}><Ic n="fit" /></Btn><Sep $w={10} />
            <Btn $w={20}><Ic n="crane" /></Btn><Btn $w={23}><Ic n="hook" /></Btn><Btn $w={22}><Ic n="win" /></Btn>
            <Handle />
          </Toolbar>
        </ToolRow>
        <ToolRow>
          <Toolbar $w={646}>
            <TGrip $m={4} />
            <Btn $w={24}><Ic n="dim" /></Btn>
            <Combo $w={60}>1.0<ComboArrow /></Combo>
            <Sep $w={8} /><Btn $w={18}><Ic n="layGray" /></Btn>
            <Combo $w={83} $off $ml={6}>0<ComboArrow $off /></Combo>
            <Sep $w={10} /><Btn $w={22}><Ic n="layers" /></Btn>
            <Combo $w={84} $ml={1}>0<ComboArrow /></Combo>
            <Sep $w={10} /><Btn $w={19}><Ic n="mag1" /></Btn><Btn $w={24}><Ic n="mag2" /></Btn>
            <Sep $w={8} /><Btn $w={28}><Ic n="grid" /></Btn><Btn $w={6}><Ic n="caret" /></Btn>
            <Sep $w={10} /><Btn $w={20}><Ic n="axes" /></Btn>
            <Sep $w={10} /><Btn $w={18}><Ic n="step" /></Btn>
            <Btn $w={22} $ml={3} $active><Ic n="snap" /></Btn>
            <Sep $w={8} /><Btn $w={22}><Ic n="yx" /></Btn>
            <Combo $w={47} $ml={1} $tight>483.003</Combo><Combo $w={47} $ml={4} $tight>220.877</Combo>
            <Handle />
          </Toolbar>
        </ToolRow>
      </HeaderBand>
      <Work>
        <Side>
          <SideStrip>
            <SideGrip />
            <Tool $h={17} $grip><ActiveTool><Ic n="ot" /></ActiveTool></Tool>
            {side1.map(n => <Tool key={n} $h={17} $grip><Ic n={n} /></Tool>)}
            <SideRule />
            {side2.map(n => <Tool key={n} $h={21.7} $menu><Ic n={n} /></Tool>)}
            <SideRule />
            <Tool $h={22}><Ic n="down" /></Tool>
            <SideHandle />
          </SideStrip>
        </Side>
        <Canvas><Plan /></Canvas>
      </Work>
      <Dock>
        <DockFade /><DockEnd /><DockGrip />
        <PropPanel><PropInner /></PropPanel>
      </Dock>
      <StatusBar>
        <StatusText>Щелкните левой кнопкой мыши на объекте для его выделения (вместе с Ctrl или Shift - добавить к выделенным)</StatusText>
      </StatusBar>
      <TaskBar>
        <Start>
          <svg width="20" height="19" viewBox="0 0 20 19"><path d="M2 3q4-2 7 0l-1 6q-3-2-7 0z" fill="#ee5522" /><path d="M10 3q4 2 8 0l-1 6q-4 2-8 0z" fill="#66cc33" /><path d="M1 10q4-2 7 0l-1 6q-3-2-7 0z" fill="#3388ee" /><path d="M9 10q4 2 8 0l-1 6q-4 2-8 0z" fill="#ffcc22" /></svg>
          пуск
        </Start>
        <Task><svg width="16" height="16" viewBox="0 0 16 16"><rect width="16" height="16" rx="2" fill="#222" /><circle cx="8" cy="6" r="4" fill="#ddd" /><path d="M6 9v4h4V9" fill="#ddd" /><circle cx="6.5" cy="6" r="1" fill="#222" /><circle cx="9.5" cy="6" r="1" fill="#222" /></svg>10.C. DEBUSSY...</Task>
        <Task><ChromeIcon />DigiSeller - Goo...</Task>
        <Task><ChromeIcon />DigiSeller - Goo...</Task>
        <Task><svg width="16" height="16" viewBox="0 0 16 16"><circle cx="5" cy="5" r="3" fill="#ffcc66" stroke="#663" /><path d="M1 15q0-7 4-7t4 7z" fill="#ccaa33" /><circle cx="11" cy="6" r="3" fill="#ffdd88" stroke="#663" /><path d="M7 15q0-6 4-6t4 6z" fill="#99ddee" /></svg>WM-чат: 4022...</Task>
        <Task $w={130}><svg width="16" height="14" viewBox="0 0 16 14"><path d="M1 2h5l1 2h8v9H1z" fill="#ffcc66" stroke="#996633" /></svg><TaskNum>2</TaskNum> Проводник<TaskCaret /></Task>
        <Task><svg width="14" height="16" viewBox="0 0 14 16"><path d="M1 1h9l3 3v11H1z" fill="#99ddee" stroke="#336699" /><path d="M3 6h7M3 9h7M3 12h7" stroke="#3399aa" /></svg>Текстовый до...</Task>
        <Task><svg width="16" height="16" viewBox="0 0 16 16"><path d="M3 8h10l-1 7H4z" fill="#ccc" stroke="#556" /><path d="M5 9L3 1" stroke="#dd2222" strokeWidth="2" /><path d="M8 9V1" stroke="#22aa22" strokeWidth="2" /><path d="M11 9l2-8" stroke="#2244dd" strokeWidth="2" /></svg>про.GIF - Paint</Task>
        <Task $active $w={130}><Logo />КОМПАС-3D V1...</Task>
        <Lang>RU</Lang>
        <Tray>
          <TrayChevron><S s={11} v={11}><path d="M7 1L3 5.5 7 10" stroke="#fff" strokeWidth="2.2" fill="none" /></S></TrayChevron>
          <TrayIcon><svg width="16" height="16" viewBox="0 0 16 16"><circle cx="9" cy="7" r="5" fill="#ddaa33" stroke="#664400" /><circle cx="9" cy="7" r="2" fill="#fff5cc" /><path d="M1 14q5-4 9-1" stroke="#664400" strokeWidth="1.5" fill="none" /></svg></TrayIcon>
          19:37
        </Tray>
      </TaskBar>
    </Screen>
  );
}
